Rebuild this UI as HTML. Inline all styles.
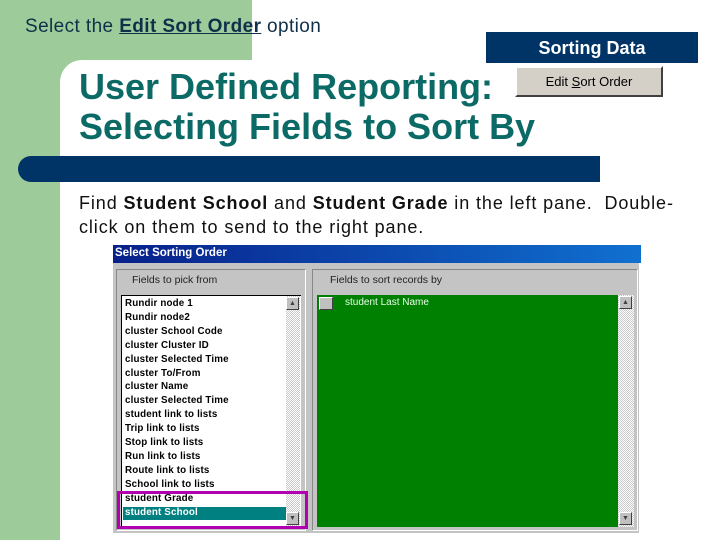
<!DOCTYPE html>
<html><head><style>
*{margin:0;padding:0;box-sizing:border-box}
body{width:720px;height:540px;position:relative;background:#fff;font-family:"Liberation Sans",sans-serif;overflow:hidden}
.a{position:absolute}
.li{position:absolute;left:3px;font:bold 9.8px "Liberation Sans",sans-serif;color:#000;white-space:nowrap;line-height:13.9px;letter-spacing:0.15px}
.sb{position:absolute;background:repeating-conic-gradient(#c8c8c8 0 25%,#fff 0 50%) 0 0/2px 2px}
.btn{position:absolute;width:13px;height:13px;background:#c0c0c0;border:1px solid;border-color:#fff #404040 #404040 #fff;font-size:7px;text-align:center;line-height:11px;color:#404040}
</style></head><body>
<div class="a" style="left:0;top:0;width:252px;height:84px;background:#9dcb9a"></div>
<div class="a" style="left:0;top:0;width:60px;height:540px;background:#9dcb9a"></div>
<div class="a" style="left:60px;top:60px;width:660px;height:480px;background:#fff;border-top-left-radius:22px"></div>
<div class="a" style="left:25px;top:16px;font-size:19px;letter-spacing:0.4px;color:#10304a;white-space:nowrap">Select the <b style="text-decoration:underline">Edit Sort Order</b> option</div>
<div class="a" style="left:486px;top:32px;width:212px;height:31px;background:#003366;color:#fff;font-weight:bold;font-size:18px;text-align:center;line-height:32px">Sorting Data</div>
<div class="a" style="left:515px;top:66px;width:148px;height:31px;background:#d4d0c8;border:2px solid;border-color:#fff #404040 #404040 #fff;font-size:13px;text-align:center;line-height:27px;color:#000">Edit <u>S</u>ort Order</div>
<div class="a" style="left:79px;top:67px;font-size:36px;font-weight:bold;color:#0c6a66;line-height:40px;white-space:nowrap">User Defined Reporting:<br>Selecting Fields to Sort By</div>
<div class="a" style="left:18px;top:156px;width:582px;height:26px;background:#003366;border-radius:13px 0 0 13px"></div>
<div class="a" style="left:79px;top:191px;font-size:18px;letter-spacing:0.9px;color:#111;line-height:24px;white-space:nowrap">Find <b>Student School</b> and <b>Student Grade</b> in the left pane.&nbsp; Double-<br>click on them to send to the right pane.</div>

<div class="a" style="left:113px;top:245px;width:528px;height:18px;background:linear-gradient(90deg,#08208a,#1070d0);color:#fff;font:bold 11.5px 'Liberation Sans',sans-serif;line-height:17px;padding-left:2px">Select Sorting Order</div>
<div class="a" style="left:113px;top:263px;width:526px;height:270px;background:#c4c4c4"></div>
<div class="a" style="left:116px;top:269px;width:190px;height:262px;border:1px solid #888;border-right-color:#fff;border-bottom-color:#fff"></div>
<div class="a" style="left:312px;top:269px;width:326px;height:262px;border:1px solid #888;border-right-color:#fff;border-bottom-color:#fff"></div>
<div class="a" style="left:132px;top:274px;font-size:10.5px;color:#222">Fields to pick from</div>
<div class="a" style="left:330px;top:274px;font-size:10.5px;color:#222">Fields to sort records by</div>
<div class="a" style="left:121px;top:295px;width:180px;height:233px;background:#fff;border:1px solid #000;border-right:none">
<div class="li" style="top:1px">Rundir node 1</div>
<div class="li" style="top:15px">Rundir node2</div>
<div class="li" style="top:29px">cluster School Code</div>
<div class="li" style="top:43px">cluster Cluster ID</div>
<div class="li" style="top:57px">cluster Selected Time</div>
<div class="li" style="top:71px">cluster To/From</div>
<div class="li" style="top:84px">cluster Name</div>
<div class="li" style="top:98px">cluster Selected Time</div>
<div class="li" style="top:112px">student link to lists</div>
<div class="li" style="top:126px">Trip link to lists</div>
<div class="li" style="top:140px">Stop link to lists</div>
<div class="li" style="top:154px">Run link to lists</div>
<div class="li" style="top:168px">Route link to lists</div>
<div class="li" style="top:182px">School link to lists</div>
<div class="li" style="top:196px">student Grade</div>
<div class="a" style="left:1px;top:211px;width:164px;height:13px;background:#008080"></div>
<div class="li" style="top:210px;color:#fff">student School</div>
</div>
<div class="sb" style="left:286px;top:296px;width:14px;height:230px"></div>
<div class="btn" style="left:286px;top:297px">▲</div>
<div class="btn" style="left:286px;top:512px">▼</div>
<div class="a" style="left:117px;top:491px;width:191px;height:38px;border:3px solid #b000b0"></div>
<div class="a" style="left:317px;top:295px;width:301px;height:232px;background:#008000"></div>
<div class="a" style="left:319px;top:297px;width:14px;height:13px;background:#c0c0c0;border:1px solid #fff;border-right-color:#404040;border-bottom-color:#404040"></div>
<div class="a" style="left:345px;top:297px;font-size:10px;color:#e8ffe8">student Last Name</div>
<div class="sb" style="left:618px;top:295px;width:16px;height:232px"></div>
<div class="btn" style="left:619px;top:296px">▲</div>
<div class="btn" style="left:619px;top:512px">▼</div>
</body></html>
